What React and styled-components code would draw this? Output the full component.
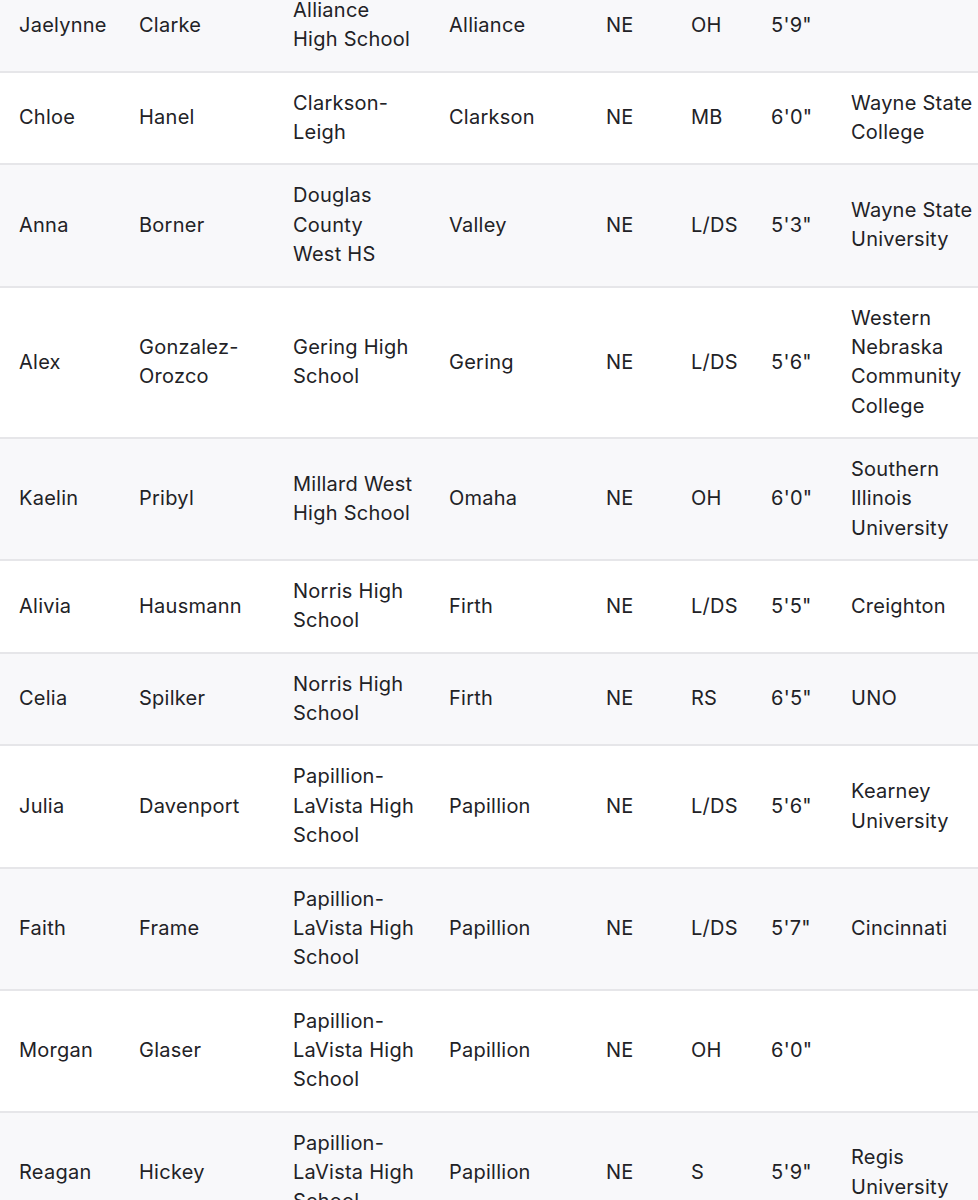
import React from "react";
import styled, { createGlobalStyle } from "styled-components";

const GlobalStyle = createGlobalStyle`
  html, body {
    margin: 0;
    padding: 0;
    background: #ffffff;
  }
  body {
    font-family: Inter, "Noto Sans", "Liberation Sans", sans-serif;
    color: #222226;
    overflow: hidden;
  }
`;

const Viewport = styled.div`
  width: 978px;
  overflow: hidden;
`;

const Table = styled.table`
  table-layout: fixed;
  border-collapse: collapse;
  width: 990px;
  margin-top: -20px;
`;

const Col = styled.col`
  width: ${(p) => p.$w}px;
`;

const Row = styled.tr`
  background: ${(p) => (p.$alt ? "#f8f8fa" : "#ffffff")};
  border-bottom: 2px solid #e6e6e9;
`;

const Cell = styled.td`
  padding: 16px 10px 16px 19px;
  vertical-align: middle;
  font-size: 20px;
  line-height: 29.36px;
  letter-spacing: 0.25px;
  font-weight: 400;
  color: #222226;
  white-space: nowrap;
`;

const Line = styled.span`
  display: block;
`;

const widths = [120, 154, 156, 157, 85, 80, 80, 158];

const rows = [
  ["Jaelynne", "Clarke", "Alliance|High School", "Alliance", "NE", "OH", `5'9"`, ""],
  ["Chloe", "Hanel", "Clarkson-|Leigh", "Clarkson", "NE", "MB", `6'0"`, "Wayne State|College"],
  ["Anna", "Borner", "Douglas|County|West HS", "Valley", "NE", "L/DS", `5'3"`, "Wayne State|University"],
  ["Alex", "Gonzalez-|Orozco", "Gering High|School", "Gering", "NE", "L/DS", `5'6"`, "Western|Nebraska|Community|College"],
  ["Kaelin", "Pribyl", "Millard West|High School", "Omaha", "NE", "OH", `6'0"`, "Southern|Illinois|University"],
  ["Alivia", "Hausmann", "Norris High|School", "Firth", "NE", "L/DS", `5'5"`, "Creighton"],
  ["Celia", "Spilker", "Norris High|School", "Firth", "NE", "RS", `6'5"`, "UNO"],
  ["Julia", "Davenport", "Papillion-|LaVista High|School", "Papillion", "NE", "L/DS", `5'6"`, "Kearney|University"],
  ["Faith", "Frame", "Papillion-|LaVista High|School", "Papillion", "NE", "L/DS", `5'7"`, "Cincinnati"],
  ["Morgan", "Glaser", "Papillion-|LaVista High|School", "Papillion", "NE", "OH", `6'0"`, ""],
  ["Reagan", "Hickey", "Papillion-|LaVista High|School", "Papillion", "NE", "S", `5'9"`, "Regis|University"],
];

export default function App() {
  return (
    <>
      <GlobalStyle />
      <Viewport>
        <Table>
          <colgroup>
            {widths.map((w, i) => (
              <Col key={i} $w={w} />
            ))}
          </colgroup>
          <tbody>
            {rows.map((r, i) => (
              <Row key={i} $alt={i % 2 === 0}>
                {r.map((c, j) => (
                  <Cell key={j}>
                    {c.split("|").map((l, k) => (
                      <Line key={k}>{l}</Line>
                    ))}
                  </Cell>
                ))}
              </Row>
            ))}
          </tbody>
        </Table>
      </Viewport>
    </>
  );
}
